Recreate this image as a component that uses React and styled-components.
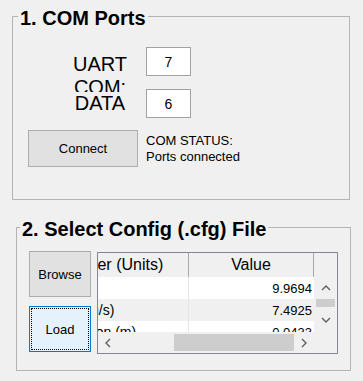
import React from 'react'
import { styled, createGlobalStyle } from 'styled-components';

const GlobalStyle = createGlobalStyle`
  html, body {
    margin: 0;
    padding: 0;
    background: #f0f0f0;
  }
  body {
    font-family: "Liberation Sans", Arial, sans-serif;
    color: #000;
  }
  #root {
    width: 363px;
    height: 381px;
    overflow: hidden;
  }
`;

const rows = [
  { name: 'Max Range (m)', value: '9.9694' },
  { name: 'Max Velocity (m/s)', value: '7.4925' },
  { name: 'Range Resolution (m)', value: '0.0433' },
];

function Chevron({ dir }) {
  const paths = {
    up: 'M1 5 L5 1 L9 5',
    down: 'M1 1 L5 5 L9 1',
    left: 'M5 1 L1 5 L5 9',
    right: 'M1 1 L5 5 L1 9',
  };
  const flat = dir === 'up' || dir === 'down';
  return (
    <svg width={flat ? 10 : 6} height={flat ? 6 : 10} viewBox={flat ? '0 0 10 6' : '0 0 6 10'}>
      <path d={paths[dir]} fill="none" stroke="#606060" strokeWidth="1.4" />
    </svg>
  );
}

export default function App() {
  return (
    <Page>
      <GlobalStyle />
      <GroupBox $top={3} $left={12} $width={338} $height={197}>
        <Legend $indent={5}>1. COM Ports</Legend>
        <ComBody>
          <PortsBlock>
            <LabelColumn>
              <PortLabel $h={39}>UART<br />COM:</PortLabel>
              <PortLabel $h={23}>DATA<br />COM:</PortLabel>
            </LabelColumn>
            <BoxColumn>
              <NumBox>7</NumBox>
              <NumBox>6</NumBox>
            </BoxColumn>
          </PortsBlock>
          <ConnectRow>
            <WinButton $w={110} $h={37}>Connect</WinButton>
            <Status>COM STATUS:<br />Ports connected</Status>
          </ConnectRow>
        </ComBody>
      </GroupBox>

      <GroupBox $top={14} $left={16} $width={335} $height={157}>
        <Legend $indent={3}>2. Select Config (.cfg) File</Legend>
        <CfgBody>
          <ButtonColumn>
            <WinButton $w={62} $h={46}>Browse</WinButton>
            <WinButton $w={62} $h={46} $focused>Load</WinButton>
          </ButtonColumn>
          <TableFrame>
            <HeaderView>
              <Track>
                <HeaderCell $w={192} $pad={40}>Parameter (Units)</HeaderCell>
                <HeaderCell $w={125} $center>Value</HeaderCell>
              </Track>
            </HeaderView>
            <BodyView>
              {rows.map((r, i) => (
                <Track key={r.name} $alt={i % 2 === 1}>
                  <NameCell>{r.name}</NameCell>
                  <ValueCell>{r.value}</ValueCell>
                </Track>
              ))}
            </BodyView>
            <VScroll>
              <ArrowBtn $h={22}><Chevron dir="up" /></ArrowBtn>
              <VThumb />
              <ArrowBtn $grow><Chevron dir="down" /></ArrowBtn>
            </VScroll>
            <HScroll>
              <ArrowBtn $w={20}><Chevron dir="left" /></ArrowBtn>
              <Spacer />
              <HThumb />
              <ArrowBtn $w={20}><Chevron dir="right" /></ArrowBtn>
            </HScroll>
          </TableFrame>
        </CfgBody>
      </GroupBox>
    </Page>
  )
}

const Page = styled.div`
  width: 363px;
  height: 381px;
  display: flex;
  flex-direction: column;
  align-items: flex-start;
`;

const GroupBox = styled.fieldset`
  box-sizing: border-box;
  margin: ${p => p.$top}px 0 0 ${p => p.$left}px;
  width: ${p => p.$width}px;
  height: ${p => p.$height}px;
  min-width: 0;
  padding: 0;
  border: 1px solid #b4b4b4;
`;

const Legend = styled.legend`
  margin-left: ${p => p.$indent}px;
  padding: 4px 2px 0;
  font: bold 20px/23px "Liberation Sans", Arial, sans-serif;
`;

const ComBody = styled.div`
  padding-top: 17px;
  display: flex;
  flex-direction: column;
`;

const PortsBlock = styled.div`
  display: flex;
  margin-left: 57px;
`;

const LabelColumn = styled.div`
  width: 60px;
  margin-top: 6px;
  display: flex;
  flex-direction: column;
`;

const PortLabel = styled.div`
  height: ${p => p.$h}px;
  overflow: hidden;
  font-size: 20px;
  line-height: 23px;
  text-align: center;
  background: #f0f0f0;
`;

const BoxColumn = styled.div`
  margin-left: 16px;
  display: flex;
  flex-direction: column;
  gap: 13px;
`;

const NumBox = styled.div`
  box-sizing: border-box;
  width: 45px;
  height: 29px;
  background: #fff;
  border: 1px solid #a2a2a2;
  display: flex;
  align-items: center;
  justify-content: center;
  font-size: 14px;
`;

const ConnectRow = styled.div`
  display: flex;
  align-items: flex-start;
  gap: 8px;
  margin: 12px 0 0 15px;
`;

const WinButton = styled.div`
  box-sizing: border-box;
  width: ${p => p.$w}px;
  height: ${p => p.$h}px;
  display: flex;
  align-items: center;
  justify-content: center;
  font-size: 13px;
  background: ${p => (p.$focused ? '#e5f1fb' : '#e1e1e1')};
  border: 1px solid ${p => (p.$focused ? '#0078d7' : '#adadad')};
  outline: ${p => (p.$focused ? '1px dotted #000' : 'none')};
  outline-offset: -3px;
`;

const Status = styled.div`
  margin-top: 3px;
  font-size: 13px;
  line-height: 16px;
`;

const CfgBody = styled.div`
  display: flex;
  align-items: flex-start;
  gap: 6px;
  padding: 10px 0 0 12px;
`;

const ButtonColumn = styled.div`
  display: flex;
  flex-direction: column;
  gap: 9px;
`;

const TableFrame = styled.div`
  box-sizing: border-box;
  margin-top: 1px;
  width: 241px;
  height: 102px;
  border: 1px solid #828790;
  background: #f0f0f0;
  display: grid;
  grid-template-columns: 216px 23px;
  grid-template-rows: 24px 55px 21px;
`;

const HeaderView = styled.div`
  grid-column: 1;
  grid-row: 1;
  overflow: hidden;
`;

const BodyView = styled.div`
  grid-column: 1;
  grid-row: 2;
  overflow: hidden;
`;

const Track = styled.div`
  display: flex;
  width: 317px;
  margin-left: -101px;
  height: ${p => (p.$alt === undefined ? 24 : 22)}px;
  background: ${p => (p.$alt === undefined ? '#f0f0f0' : p.$alt ? '#f0f0f0' : '#fff')};
  flex-shrink: 0;
`;

const HeaderCell = styled.div`
  box-sizing: border-box;
  width: ${p => p.$w}px;
  padding-left: ${p => p.$pad || 0}px;
  border-right: 1px solid #a8a8a8;
  display: flex;
  align-items: center;
  justify-content: ${p => (p.$center ? 'center' : 'flex-start')};
  font-size: 16px;
  white-space: nowrap;
`;

const NameCell = styled.div`
  box-sizing: border-box;
  width: 192px;
  padding-left: 3px;
  border-right: 1px solid #e6e6e6;
  display: flex;
  align-items: center;
  font-size: 14px;
  white-space: nowrap;
`;

const ValueCell = styled.div`
  box-sizing: border-box;
  width: 125px;
  padding-right: 2px;
  display: flex;
  align-items: center;
  justify-content: flex-end;
  font-size: 13px;
`;

const VScroll = styled.div`
  grid-column: 2;
  grid-row: 2;
  display: flex;
  flex-direction: column;
`;

const HScroll = styled.div`
  grid-column: 1;
  grid-row: 3;
  display: flex;
  align-items: center;
`;

const ArrowBtn = styled.div`
  display: flex;
  align-items: center;
  justify-content: center;
  flex: ${p => (p.$grow ? '1' : 'none')};
  width: ${p => (p.$w ? `${p.$w}px` : 'auto')};
  height: ${p => (p.$h ? `${p.$h}px` : 'auto')};
  align-self: stretch;
`;

const VThumb = styled.div`
  height: 8px;
  margin: 0 2px;
  background: #cdcdcd;
`;

const HThumb = styled.div`
  width: 120px;
  height: 17px;
  background: #cdcdcd;
`;

const Spacer = styled.div`
  flex: 1;
`;
